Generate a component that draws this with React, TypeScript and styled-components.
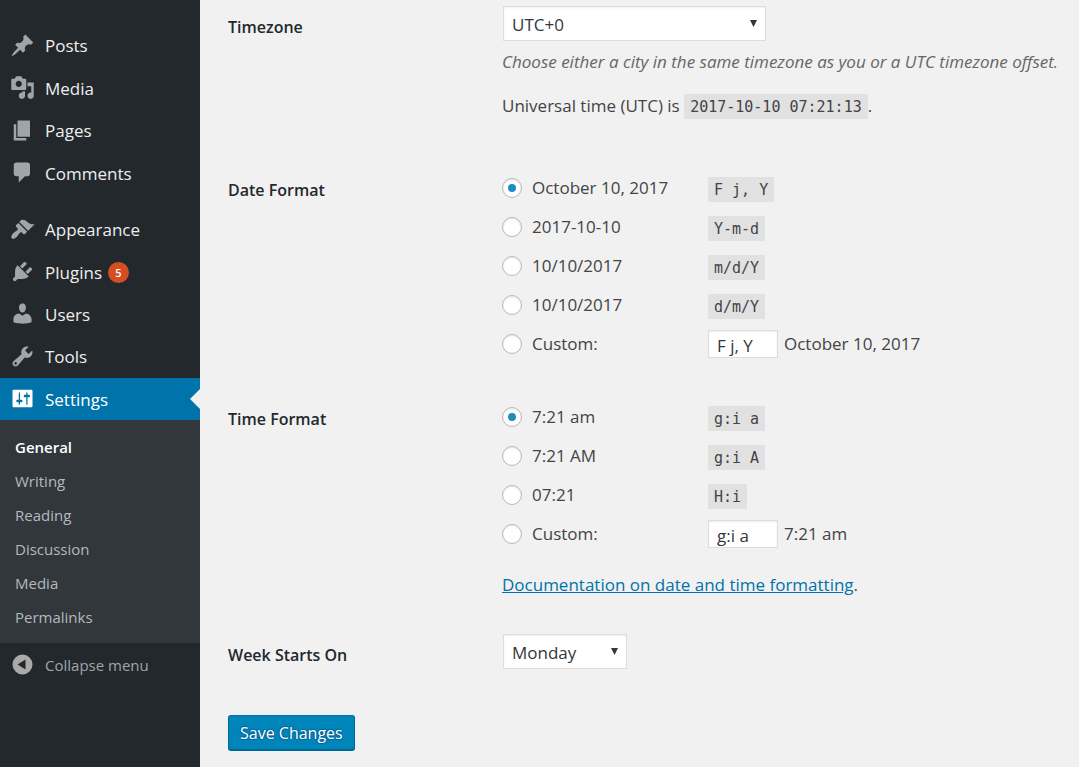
import React, { useState } from 'react';
import styled, { createGlobalStyle, css } from 'styled-components';

const sans = `"Segoe UI", "Open Sans", "Noto Sans", sans-serif`;
const mono = `Consolas, "DejaVu Sans Mono", monospace`;

const GlobalStyle = createGlobalStyle`
  *, *::before, *::after { box-sizing: border-box; }
  body {
    margin: 0;
    background: #f1f1f1;
    color: #444;
    font: 400 17px/26px ${sans};
  }
`;

const Page = styled.div`
  display: flex;
  min-height: 100vh;
`;

const Sidebar = styled.nav`
  flex: 0 0 200px;
  padding-top: 24px;
  background: #23282d;
`;

const MenuGroup = styled.ul<{ $height: number }>`
  display: grid;
  grid-auto-rows: 1fr;
  min-height: ${(p) => p.$height}px;
  margin: 0;
  padding: 0;
  list-style: none;
`;

const Separator = styled.div`
  height: 14px;
`;

const MenuLink = styled.a<{ $current?: boolean }>`
  position: relative;
  display: flex;
  align-items: center;
  gap: 10px;
  height: 100%;
  padding: 0 10px;
  color: #eee;
  text-decoration: none;

  svg {
    flex: none;
    width: 25px;
    height: 25px;
    fill: #a0a5aa;
  }

  ${(p) =>
    p.$current &&
    css`
      background: #0073aa;
      color: #fff;

      svg {
        fill: #fff;
      }

      &::after {
        content: '';
        position: absolute;
        right: 0;
        top: 50%;
        margin-top: -10px;
        border: 10px solid transparent;
        border-left-width: 0;
        border-right-color: #f1f1f1;
      }
    `}
`;

const MenuText = styled.span`
  padding-top: 2px;
`;

const Badge = styled.span`
  width: 21px;
  margin: 2px 0 0 -4px;
  border-radius: 50%;
  background: #d54e21;
  color: #fff;
  font-size: 11px;
  font-weight: 600;
  line-height: 21px;
  text-align: center;
`;

const Submenu = styled.ul`
  margin: 0;
  padding: 10px 0 9px;
  background: #32373c;
  list-style: none;
`;

const SubmenuLink = styled.a<{ $current?: boolean }>`
  display: block;
  padding: 0 15px;
  color: ${(p) => (p.$current ? '#fff' : '#b4b9be')};
  font-size: 15px;
  font-weight: ${(p) => (p.$current ? 600 : 400)};
  line-height: 34px;
  text-decoration: none;
`;

const CollapseButton = styled.button`
  display: flex;
  align-items: center;
  gap: 10px;
  width: 100%;
  height: 42px;
  padding: 0 10px;
  border: 0;
  background: none;
  color: #a0a5aa;
  font: 400 15px/26px ${sans};

  svg {
    width: 25px;
    height: 25px;
    fill: #aaa;
  }
`;

const Content = styled.form`
  flex: 1;
  min-width: 0;
  padding: 6px 12px 16px 28px;
`;

const Setting = styled.div<{ $after: number }>`
  display: grid;
  grid-template-columns: 274px minmax(0, 1fr);
  margin-bottom: ${(p) => p.$after}px;
`;

const heading = css`
  padding-top: 8px;
  color: #23282d;
  font-size: 16px;
  font-weight: 600;
  line-height: 26px;
`;

const HeadingLabel = styled.label`
  ${heading}
`;

const Heading = styled.div`
  ${heading}
`;

const SelectBox = styled.span<{ $width: number }>`
  position: relative;
  display: block;
  width: ${(p) => p.$width}px;
  margin-left: 1px;

  svg {
    position: absolute;
    right: 9px;
    top: 14px;
    width: 7px;
    height: 7px;
    fill: #32373c;
    pointer-events: none;
  }
`;

const Select = styled.select`
  display: block;
  width: 100%;
  height: 35px;
  padding: 2px 24px 0 8px;
  border: 1px solid #ddd;
  border-radius: 0;
  background: #fff;
  box-shadow: inset 0 1px 2px rgba(0, 0, 0, 0.07);
  color: #32373c;
  font: 400 17px/26px ${sans};
  appearance: none;
`;

const Description = styled.p`
  margin: 8px 0 18px;
  color: #666;
  font-style: italic;
`;

const Paragraph = styled.p`
  margin: 0;
`;

const Code = styled.code`
  display: inline-block;
  padding: 2px 6px 0;
  background: #e1e1e1;
  font: 400 15px/23px ${mono};
`;

const OptionList = styled.div`
  display: grid;
  grid-auto-rows: 39px;
`;

const Option = styled.div`
  display: flex;
  align-items: center;
  padding-bottom: 2px;

  ${Code} {
    margin-top: 4px;
  }
`;

const OptionLabel = styled.label`
  display: flex;
  align-items: center;
  gap: 10px;
  width: 206px;
`;

const Radio = styled.input`
  display: grid;
  place-items: center;
  width: 20px;
  height: 20px;
  margin: 0;
  border: 1px solid #b4b9be;
  border-radius: 50%;
  background: #fff;
  box-shadow: inset 0 1px 2px rgba(0, 0, 0, 0.1);
  appearance: none;

  &:checked::before {
    content: '';
    width: 8px;
    height: 8px;
    border-radius: 50%;
    background: #1e8cbe;
  }
`;

const SmallInput = styled.input`
  width: 70px;
  height: 28px;
  margin-right: 6px;
  padding: 3px 8px 0;
  border: 1px solid #ddd;
  background: #fff;
  box-shadow: inset 0 1px 2px rgba(0, 0, 0, 0.07);
  color: #32373c;
  font: 400 17px/24px ${sans};
`;

const DocsNote = styled.p`
  margin: 18px 0 0;

  a {
    color: #0073aa;
  }
`;

const SaveButton = styled.button`
  height: 35px;
  padding: 0 11px;
  border: 1px solid #006799;
  border-top-color: #0073aa;
  border-radius: 3px;
  background: #0085ba;
  box-shadow: 0 1px 0 #006799;
  color: #fff;
  font: 400 16px/26px ${sans};
  text-shadow: 0 -1px 1px #006799, 1px 0 1px #006799, 0 1px 1px #006799, -1px 0 1px #006799;
`;

const icons = {
  post: 'M10.44 3.02l1.82-1.82 6.36 6.35-1.83 1.82c-1.05-.68-2.48-.57-3.41.36l-.75.75c-.92.93-1.04 2.35-.35 3.41l-1.83 1.82-2.41-2.41-2.8 2.79c-.42.42-3.38 2.71-3.8 2.29s1.86-3.39 2.28-3.81l2.79-2.79L4.1 9.36l1.83-1.82c1.05.69 2.48.57 3.4-.36l.75-.75c.93-.92 1.05-2.35.36-3.41z',
  media: 'M13 11V4c0-.55-.45-1-1-1h-1.67L9 1H5L3.67 3H2c-.55 0-1 .45-1 1v7c0 .55.45 1 1 1h10c.55 0 1-.45 1-1zM7 4.5c1.38 0 2.5 1.12 2.5 2.5S8.38 9.5 7 9.5 4.5 8.38 4.5 7 5.62 4.5 7 4.5zM14 6h5v10.5c0 1.38-1.12 2.5-2.5 2.5S14 17.88 14 16.5s1.12-2.5 2.5-2.5c.17 0 .34.02.5.05V9h-3V6zm-4 8.05V13h2v3.5c0 1.38-1.12 2.5-2.5 2.5S7 17.88 7 16.5 8.12 14 9.5 14c.17 0 .34.02.5.05z',
  page: 'M6 15V2h10v13H6zm-1 1h8v2H3V5h2v11z',
  comments: 'M5 2h9c1.1 0 2 .9 2 2v7c0 1.1-.9 2-2 2h-2l-5 5v-5H5c-1.1 0-2-.9-2-2V4c0-1.1.9-2 2-2z',
  appearance: 'M14.48 11.06L7.41 3.99l1.5-1.5c.5-.56 2.3-.47 3.51.32 1.21.8 1.43 1.28 2.91 2.1 1.18.64 2.45 1.26 4.45.85zm-.71.71L6.7 4.7 4.93 6.47c-.39.39-.39 1.02 0 1.41l1.06 1.06c.39.39.39 1.03 0 1.42-.6.6-1.43 1.11-2.21 1.69-.35.26-.7.53-1.01.84C1.43 14.23.4 16.08 1.4 17.07c.99 1 2.84-.03 4.18-1.36.31-.31.58-.66.85-1.02.57-.78 1.08-1.61 1.69-2.21.39-.39 1.02-.39 1.41 0l1.06 1.06c.39.39 1.02.39 1.41 0z',
  plugins: 'M13.11 4.36L9.87 7.6 8 5.73l3.24-3.24c.35-.34 1.05-.2 1.56.32.52.51.66 1.21.31 1.55zm-8 1.77l.91-1.12 9.01 9.01-1.19.84c-.71.71-2.63 1.16-3.82 1.16H6.14L4.9 17.26c-.59.59-1.54.59-2.12 0-.59-.58-.59-1.53 0-2.12l1.24-1.24v-3.88c0-1.13.4-3.19 1.09-3.89zm7.26 3.97l3.24-3.24c.34-.35 1.04-.21 1.55.31.52.51.66 1.21.31 1.55l-3.24 3.25z',
  users: 'M10 9.25c-2.27 0-2.73-3.44-2.73-3.44C7 4.02 7.82 2 9.97 2c2.16 0 2.98 2.02 2.71 3.81 0 0-.41 3.44-2.68 3.44zm0 2.57L12.72 10c2.39 0 4.52 2.33 4.52 4.53v2.49s-3.65 1.13-7.24 1.13c-3.65 0-7.24-1.13-7.24-1.13v-2.49c0-2.25 1.94-4.48 4.47-4.48z',
  tools: 'M16.68 9.77c-1.34 1.34-3.3 1.67-4.95.99l-5.41 6.52c-.99.99-2.59.99-3.58 0s-.99-2.59 0-3.57l6.52-5.42c-.68-1.65-.35-3.61.99-4.95 1.28-1.28 3.12-1.62 4.72-1.06l-2.89 2.89 2.82 2.82 2.86-2.87c.53 1.58.18 3.39-1.08 4.65zM3.81 16.21c.4.39 1.04.39 1.43 0 .4-.4.4-1.04 0-1.43-.39-.4-1.03-.4-1.43 0-.39.39-.39 1.03 0 1.43z',
  settings: 'M18 16V4c0-.55-.45-1-1-1H3c-.55 0-1 .45-1 1v12c0 .55.45 1 1 1h14c.55 0 1-.45 1-1zM8 11h1c.55 0 1 .45 1 1s-.45 1-1 1H8v1.5c0 .28-.22.5-.5.5s-.5-.22-.5-.5V13H6c-.55 0-1-.45-1-1s.45-1 1-1h1V5.5c0-.28.22-.5.5-.5s.5.22.5.5V11zm5-2h-1c-.55 0-1-.45-1-1s.45-1 1-1h1V5.5c0-.28.22-.5.5-.5s.5.22.5.5V7h1c.55 0 1 .45 1 1s-.45 1-1 1h-1v5.5c0 .28-.22.5-.5.5s-.5-.22-.5-.5V9z',
  collapse: 'M10 2a8 8 0 1 0 0 16a8 8 0 1 0 0-16zM12.4 6v8L6 10z',
};

type IconName = keyof typeof icons;

function Icon({ name }: { name: IconName }) {
  return (
    <svg viewBox="0 0 20 20" aria-hidden="true">
      <path fillRule="evenodd" d={icons[name]} />
    </svg>
  );
}

type Item = { icon: IconName; text: string; badge?: number; current?: boolean };

const contentMenu: Item[] = [
  { icon: 'post', text: 'Posts' },
  { icon: 'media', text: 'Media' },
  { icon: 'page', text: 'Pages' },
  { icon: 'comments', text: 'Comments' },
];

const adminMenu: Item[] = [
  { icon: 'appearance', text: 'Appearance' },
  { icon: 'plugins', text: 'Plugins', badge: 5 },
  { icon: 'users', text: 'Users' },
  { icon: 'tools', text: 'Tools' },
  { icon: 'settings', text: 'Settings', current: true },
];

const settingsPages = ['General', 'Writing', 'Reading', 'Discussion', 'Media', 'Permalinks'];

function Menu({ items, height }: { items: Item[]; height: number }) {
  return (
    <MenuGroup $height={height}>
      {items.map((item) => (
        <li key={item.text}>
          <MenuLink href="#" $current={item.current} aria-current={item.current ? 'page' : undefined}>
            <Icon name={item.icon} />
            <MenuText>{item.text}</MenuText>
            {item.badge && <Badge>{item.badge}</Badge>}
          </MenuLink>
        </li>
      ))}
    </MenuGroup>
  );
}

function Dropdown({ id, width, options }: { id: string; width: number; options: string[] }) {
  return (
    <SelectBox $width={width}>
      <Select id={id}>
        {options.map((o) => (
          <option key={o}>{o}</option>
        ))}
      </Select>
      <svg viewBox="0 0 7 7" aria-hidden="true">
        <path d="M0 0h7L3.5 7z" />
      </svg>
    </SelectBox>
  );
}

type Choice = { text: string; format: string };

function FormatChoices({
  name,
  title,
  choices,
  custom,
}: {
  name: string;
  title: string;
  choices: Choice[];
  custom: Choice;
}) {
  const [selected, setSelected] = useState(0);
  return (
    <OptionList role="radiogroup" aria-label={title}>
      {choices.map((choice, i) => (
        <Option key={choice.format}>
          <OptionLabel>
            <Radio type="radio" name={name} checked={selected === i} onChange={() => setSelected(i)} />
            {choice.text}
          </OptionLabel>
          <Code>{choice.format}</Code>
        </Option>
      ))}
      <Option>
        <OptionLabel>
          <Radio
            type="radio"
            name={name}
            checked={selected === choices.length}
            onChange={() => setSelected(choices.length)}
          />
          Custom:
        </OptionLabel>
        <SmallInput type="text" aria-label={`Custom ${title}`} defaultValue={custom.format} />
        <span>{custom.text}</span>
      </Option>
    </OptionList>
  );
}

export default function App() {
  return (
    <Page>
      <GlobalStyle />
      <Sidebar>
        <Menu items={contentMenu} height={170} />
        <Separator />
        <Menu items={adminMenu} height={212} />
        <Submenu>
          {settingsPages.map((text, i) => (
            <li key={text}>
              <SubmenuLink href="#" $current={i === 0}>
                {text}
              </SubmenuLink>
            </li>
          ))}
        </Submenu>
        <CollapseButton type="button">
          <Icon name="collapse" />
          <MenuText>Collapse menu</MenuText>
        </CollapseButton>
      </Sidebar>

      <Content onSubmit={(e) => e.preventDefault()}>
        <Setting $after={50}>
          <HeadingLabel htmlFor="timezone">Timezone</HeadingLabel>
          <div>
            <Dropdown id="timezone" width={263} options={['UTC+0', 'UTC+1', 'UTC+2']} />
            <Description>Choose either a city in the same timezone as you or a UTC timezone offset.</Description>
            <Paragraph>
              Universal time (UTC) is <Code>2017-10-10 07:21:13</Code>.
            </Paragraph>
          </div>
        </Setting>

        <Setting $after={34}>
          <Heading>Date Format</Heading>
          <FormatChoices
            name="date_format"
            title="Date Format"
            choices={[
              { text: 'October 10, 2017', format: 'F j, Y' },
              { text: '2017-10-10', format: 'Y-m-d' },
              { text: '10/10/2017', format: 'm/d/Y' },
              { text: '10/10/2017', format: 'd/m/Y' },
            ]}
            custom={{ text: 'October 10, 2017', format: 'F j, Y' }}
          />
        </Setting>

        <Setting $after={36}>
          <Heading>Time Format</Heading>
          <div>
            <FormatChoices
              name="time_format"
              title="Time Format"
              choices={[
                { text: '7:21 am', format: 'g:i a' },
                { text: '7:21 AM', format: 'g:i A' },
                { text: '07:21', format: 'H:i' },
              ]}
              custom={{ text: '7:21 am', format: 'g:i a' }}
            />
            <DocsNote>
              <a href="#">Documentation on date and time formatting</a>.
            </DocsNote>
          </div>
        </Setting>

        <Setting $after={46}>
          <HeadingLabel htmlFor="start_of_week">Week Starts On</HeadingLabel>
          <Dropdown
            id="start_of_week"
            width={124}
            options={['Monday', 'Tuesday', 'Wednesday', 'Thursday', 'Friday', 'Saturday', 'Sunday']}
          />
        </Setting>

        <SaveButton type="submit">Save Changes</SaveButton>
      </Content>
    </Page>
  );
}
